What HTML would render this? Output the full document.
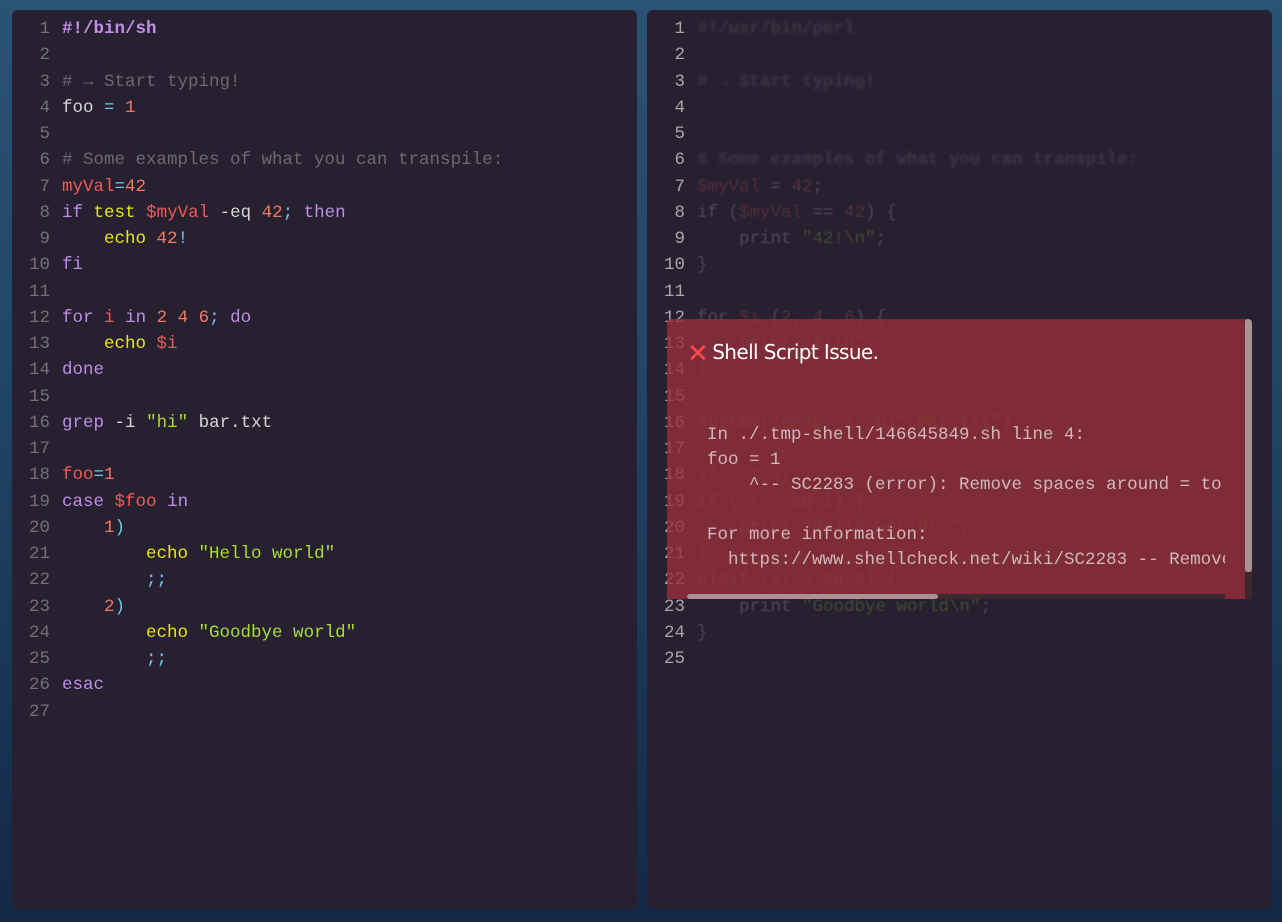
<!DOCTYPE html>
<html><head><meta charset="utf-8"><style>
html,body{margin:0;padding:0}
body{width:1282px;height:922px;overflow:hidden;background:linear-gradient(180deg,#2b5373 0%,#1f4262 50%,#132846 100%);position:relative;font-family:"Liberation Mono",monospace}
.p{position:absolute;top:10px;width:625px;height:899px;background:#262030;border-radius:6px;overflow:hidden}
.code{position:absolute;top:6px;left:0;font-size:17.5px;line-height:26.25px;white-space:pre;font-family:"Liberation Mono",monospace}
.ln{display:inline-block;width:38px;text-align:right;color:#727272;margin-right:12px}
.c{color:#d6d6d6}
.k{color:#c08ee6}.y{color:#e8e810}.n{color:#f27a62}.v{color:#ef5a55}.s{color:#a9dc3a}.o{color:#6cc8ec}.m{color:#6b6b6b}.b{font-weight:bold}
#r .ln{color:#a8a8a8}
#r .t{opacity:.22;filter:blur(.4px)}
#r .bl{opacity:.12;filter:blur(1.2px)}
.pop{position:absolute;left:667px;top:319px;width:585px;height:280px;background:rgba(148,48,58,.82);border-radius:4px 4px 0 0;overflow:hidden}
.pop h{position:absolute;left:20px;top:21px;font:20px "DejaVu Sans","Liberation Sans",sans-serif;color:#fff;letter-spacing:-.6px}
.x{display:inline-block;color:#ff4a4a;font-weight:bold;font-size:26px;line-height:20px;vertical-align:-3px;margin-right:4px}
.pop pre{position:absolute;left:40px;top:104px;margin:0;font:17.5px/25px "Liberation Mono",monospace;color:#cfb9bd;width:518px;overflow:hidden}
.vs{position:absolute;left:578px;top:0;width:7px;height:253px;background:#a89294;border-radius:3px}
.vt{position:absolute;left:578px;top:253px;width:7px;height:27px;background:#3a2a30}
.hs{position:absolute;left:20px;top:275px;width:538px;height:5px;background:#3a2a30}
.hh{position:absolute;left:20px;top:275px;width:251px;height:5px;background:#a89294;border-radius:3px}
</style></head><body>
<div class="p" style="left:12px"><div class="code"><span class="ln">1</span><span class="k b">#!/bin/sh</span>
<span class="ln">2</span>
<span class="ln">3</span><span class="m"># → Start typing!</span>
<span class="ln">4</span><span class="c">foo </span><span class="o">=</span> <span class="n">1</span>
<span class="ln">5</span>
<span class="ln">6</span><span class="m"># Some examples of what you can transpile:</span>
<span class="ln">7</span><span class="v">myVal</span><span class="o">=</span><span class="n">42</span>
<span class="ln">8</span><span class="k">if</span> <span class="y">test</span> <span class="v">$myVal</span> <span class="c">-eq</span> <span class="n">42</span><span class="o">;</span> <span class="k">then</span>
<span class="ln">9</span>    <span class="y">echo</span> <span class="n">42</span><span class="o">!</span>
<span class="ln">10</span><span class="k">fi</span>
<span class="ln">11</span>
<span class="ln">12</span><span class="k">for</span> <span class="v">i</span> <span class="k">in</span> <span class="n">2 4 6</span><span class="o">;</span> <span class="k">do</span>
<span class="ln">13</span>    <span class="y">echo</span> <span class="v">$i</span>
<span class="ln">14</span><span class="k">done</span>
<span class="ln">15</span>
<span class="ln">16</span><span class="k">grep</span> <span class="c">-i</span> <span class="s">"hi"</span> <span class="c">bar.txt</span>
<span class="ln">17</span>
<span class="ln">18</span><span class="v">foo</span><span class="o">=</span><span class="n">1</span>
<span class="ln">19</span><span class="k">case</span> <span class="v">$foo</span> <span class="k">in</span>
<span class="ln">20</span>    <span class="n">1</span><span class="o">)</span>
<span class="ln">21</span>        <span class="y">echo</span> <span class="s">"Hello world"</span>
<span class="ln">22</span>        <span class="o">;;</span>
<span class="ln">23</span>    <span class="n">2</span><span class="o">)</span>
<span class="ln">24</span>        <span class="y">echo</span> <span class="s">"Goodbye world"</span>
<span class="ln">25</span>        <span class="o">;;</span>
<span class="ln">26</span><span class="k">esac</span>
<span class="ln">27</span></div></div>
<div class="p" id="r" style="left:647px"><div class="code"><span class="ln">1</span><span class="bl c b">#!/usr/bin/perl</span>
<span class="ln">2</span>
<span class="ln">3</span><span class="bl c b"># → Start typing!</span>
<span class="ln">4</span>
<span class="ln">5</span>
<span class="ln">6</span><span class="bl c b"># Some examples of what you can transpile:</span>
<span class="ln">7</span><span class="t"><span class="v">$myVal</span><span class="c"> = </span><span class="n">42</span><span class="c">;</span></span>
<span class="ln">8</span><span class="t"><span class="c">if (</span><span class="v">$myVal</span><span class="c"> == </span><span class="n">42</span><span class="c">) {</span></span>
<span class="ln">9</span><span class="t"><span class="c">    print </span><span class="s">"42!\n"</span><span class="c">;</span></span>
<span class="ln">10</span><span class="t c">}</span>
<span class="ln">11</span>
<span class="ln">12</span><span class="t"><span class="c">for </span><span class="v">$i</span><span class="c"> (</span><span class="n">2</span><span class="c">, </span><span class="n">4</span><span class="c">, </span><span class="n">6</span><span class="c">) {</span></span>
<span class="ln">13</span><span class="t"><span class="c">    print </span><span class="s">"$i\n"</span><span class="c">;</span></span>
<span class="ln">14</span><span class="t c">}</span>
<span class="ln">15</span>
<span class="ln">16</span><span class="t"><span class="c">system(</span><span class="s">"grep -i "hi" bar.txt"</span><span class="c">);</span></span>
<span class="ln">17</span>
<span class="ln">18</span><span class="t"><span class="v">$foo</span><span class="c"> = </span><span class="n">1</span><span class="c">;</span></span>
<span class="ln">19</span><span class="t"><span class="c">if (</span><span class="v">$foo</span><span class="c"> eq </span><span class="n">1</span><span class="c">) {</span></span>
<span class="ln">20</span><span class="t"><span class="c">    print </span><span class="s">"Hello world\n"</span><span class="c">;</span></span>
<span class="ln">21</span><span class="t c">}</span>
<span class="ln">22</span><span class="t"><span class="c">elsif (</span><span class="v">$foo</span><span class="c"> eq </span><span class="n">2</span><span class="c">) {</span></span>
<span class="ln">23</span><span class="t"><span class="c">    print </span><span class="s">"Goodbye world\n"</span><span class="c">;</span></span>
<span class="ln">24</span><span class="t c">}</span>
<span class="ln">25</span></div></div>
<div class="pop"><h><span class="x">✕</span>Shell Script Issue.</h>
<pre>In ./.tmp-shell/146645849.sh line 4:
foo = 1
    ^-- SC2283 (error): Remove spaces around = to assign

For more information:
  https://www.shellcheck.net/wiki/SC2283 -- Remove spaces</pre>
<div class="vs"></div><div class="vt"></div><div class="hs"></div><div class="hh"></div></div>
</body></html>
